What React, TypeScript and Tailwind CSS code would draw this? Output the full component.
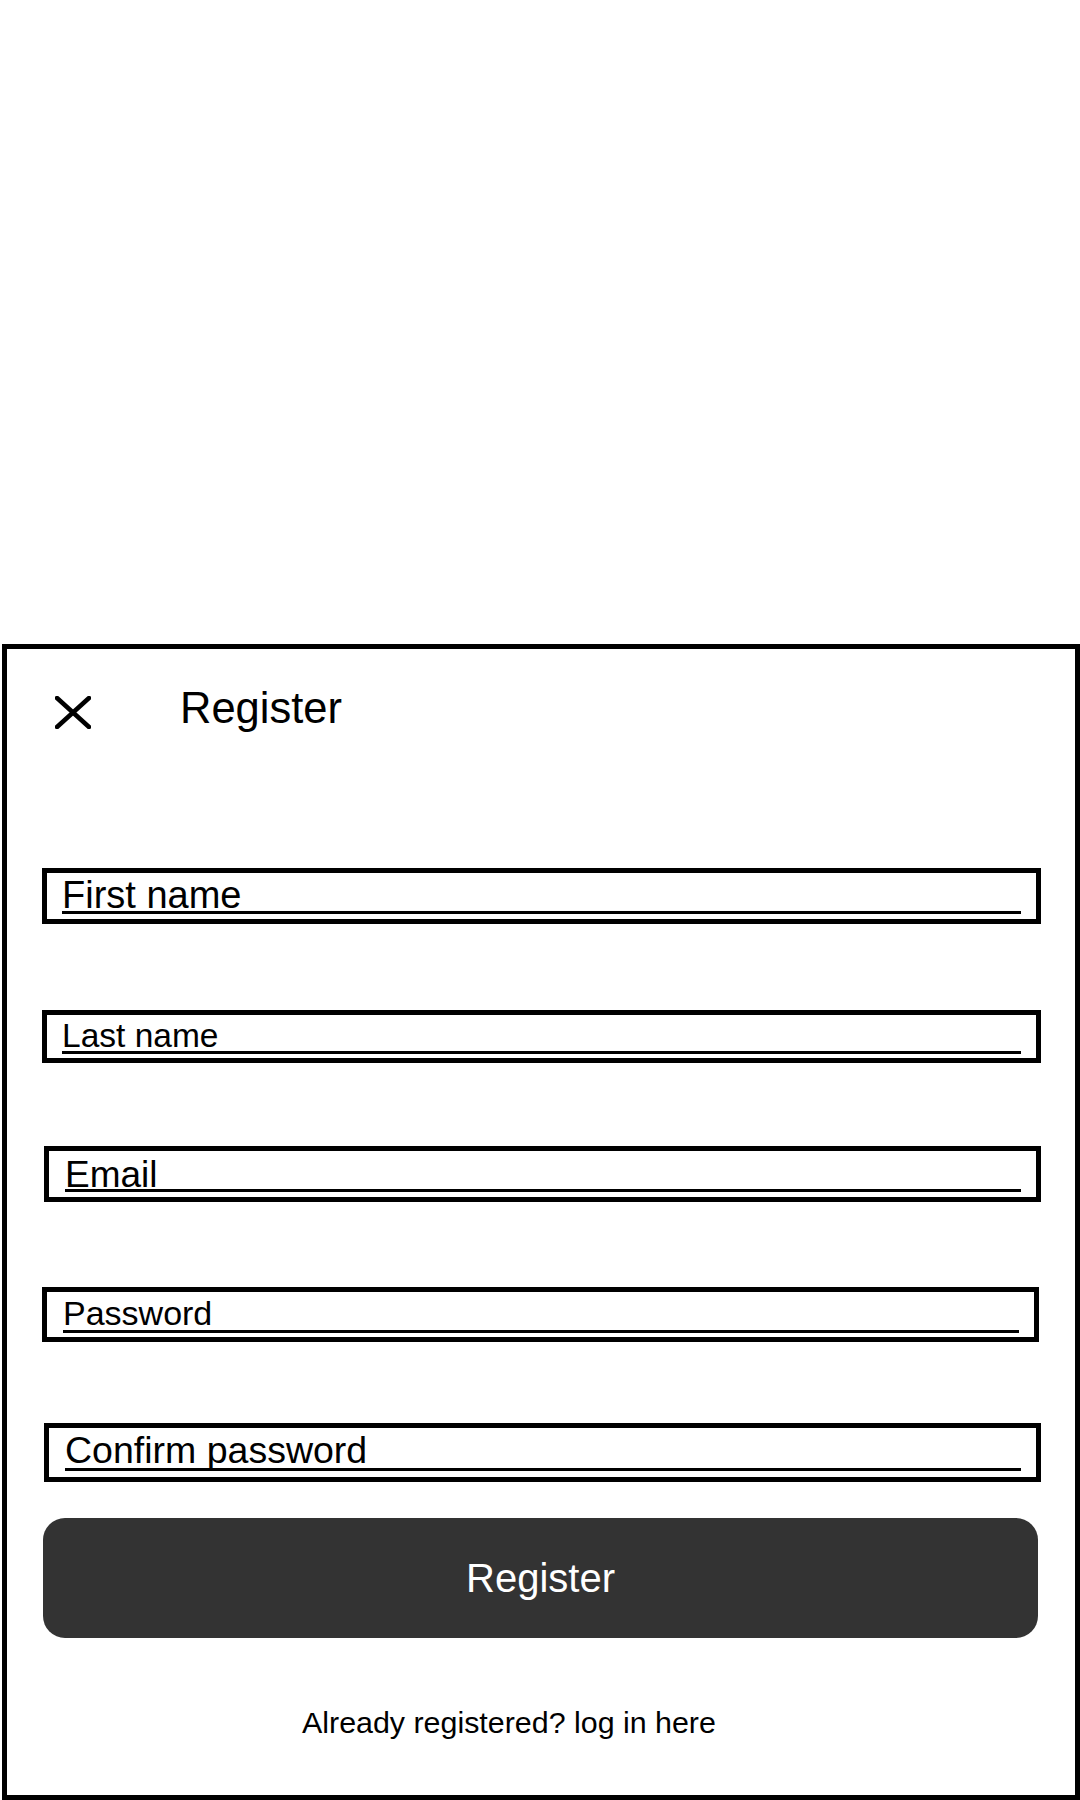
import React from "react";

type FieldProps = {
  label: string;
  outer: string;
  pad: string;
  text: string;
};

function Field({ label, outer, pad, text }: FieldProps) {
  return (
    <div className={`border-x-[5px] border-y-[5px] border-black bg-white ${outer}`}>
      <div className={pad}>
        <div className={`border-b-[3px] border-black text-black whitespace-nowrap ${text}`}>{label}</div>
      </div>
    </div>
  );
}

export default function App() {
  return (
    <div className="w-[1080px] h-[1800px] bg-white font-['Liberation_Sans',Arial,sans-serif] pt-[644px] pl-[2px]">
      <div className="w-[1078px] h-[1156px] border-[5px] border-black bg-white">
        {/* Header */}
        <div className="flex items-start h-[80px] pt-[38px] pl-[48px]">
          <svg className="mt-[9px]" width="36" height="33" viewBox="0 0 36 33" aria-hidden="true">
            <line x1="2" y1="2" x2="34" y2="31" stroke="#000" strokeWidth="4.5" strokeLinecap="round" />
            <line x1="34" y1="2" x2="2" y2="31" stroke="#000" strokeWidth="4.5" strokeLinecap="round" />
          </svg>
          <div className="ml-[89px] text-[43.5px] leading-none text-black">Register</div>
        </div>

        {/* Fields */}
        <Field
          label="First name"
          outer="mt-[139px] ml-[35px] w-[999px] h-[56px]"
          pad="pt-[6px] px-[15px]"
          text="text-[38px] leading-[32px]"
        />
        <Field
          label="Last name"
          outer="mt-[86px] ml-[35px] w-[999px] h-[53px]"
          pad="pt-[5px] px-[15px]"
          text="text-[33.5px] leading-[31px]"
        />
        <Field
          label="Email"
          outer="mt-[83px] ml-[37px] w-[997px] h-[56px]"
          pad="pt-[9px] pl-[16px] pr-[15px]"
          text="text-[37px] leading-[29px]"
        />
        <Field
          label="Password"
          outer="mt-[85px] ml-[35px] w-[997px] h-[55px]"
          pad="pt-[5px] pl-[16px] pr-[15px]"
          text="text-[34px] leading-[33px]"
        />
        <Field
          label="Confirm password"
          outer="mt-[81px] ml-[37px] w-[997px] h-[59px]"
          pad="pt-[4px] pl-[16px] pr-[15px]"
          text="text-[37.5px] leading-[36px]"
        />

        {/* Button */}
        <button
          type="button"
          className="mt-[36px] ml-[36px] w-[995px] h-[120px] rounded-[22px] bg-[#333333] text-white text-[40px] leading-none flex items-center justify-center"
        >
          Register
        </button>

        {/* Footer link */}
        <div className="mt-[69px] ml-[295px] text-[30.4px] leading-none text-black whitespace-nowrap">
          Already registered? log in here
        </div>
      </div>
    </div>
  );
}
